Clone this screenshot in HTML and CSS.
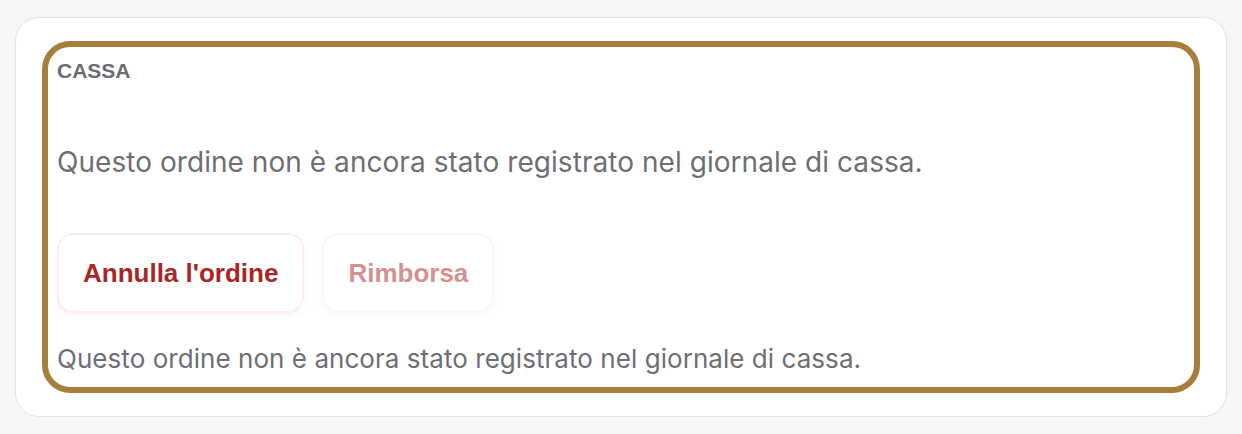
FILE: index.html
```html
<!DOCTYPE html>
<html lang="it">
<head>
  <meta charset="UTF-8" />
  <meta name="viewport" content="width=device-width, initial-scale=1.0"/>
  <title>Cassa</title>
  <link rel="stylesheet" href="styles.css">
</head>
<body>
  <div class="card">
    <section class="cash-box">
      <h2>CASSA</h2>
      <p class="status">Questo ordine non è ancora stato registrato nel giornale di cassa.</p>
      <div class="actions">
        <button class="btn">Annulla l'ordine</button>
        <button class="btn" disabled>Rimborsa</button>
      </div>
      <p class="note">Questo ordine non è ancora stato registrato nel giornale di cassa.</p>
    </section>
  </div>
</body>
</html>
```
FILE: styles.css
```css
body { margin:0; padding:17px 15px 0; background:#f6f6f6; font-family:Inter,"Noto Sans",sans-serif; color:#6e6e73; }
.card { background:#fff; border:1px solid #e2e2e2; border-radius:24px; padding:23px 26px; }
.cash-box { border:6px solid #a67f3b; border-radius:28px; padding:12px 9px 12px; display:flex; flex-direction:column; }
.cash-box h2 { margin:0; font-family:"Liberation Sans",Arial,sans-serif; font-size:21px; font-weight:bold; color:#6b6b70; line-height:23px; }
.status { margin:63px 0 0; font-size:28px; line-height:34px; letter-spacing:0.05px; }
.actions { display:flex; gap:18px; margin-top:54px; }
.btn { font-family:"Liberation Sans",Arial,sans-serif; font-size:26px; font-weight:bold; color:#a82626; background:#fff; border:2px solid #fcecee; border-radius:16px; padding:23px 24px; line-height:30px; box-shadow:0 3px 5px rgba(176,42,42,0.05); cursor:pointer; }
.btn:disabled { opacity:0.5; cursor:default; }
.note { margin:30px 0 0; font-size:26px; line-height:32px; letter-spacing:0.05px; }
```
